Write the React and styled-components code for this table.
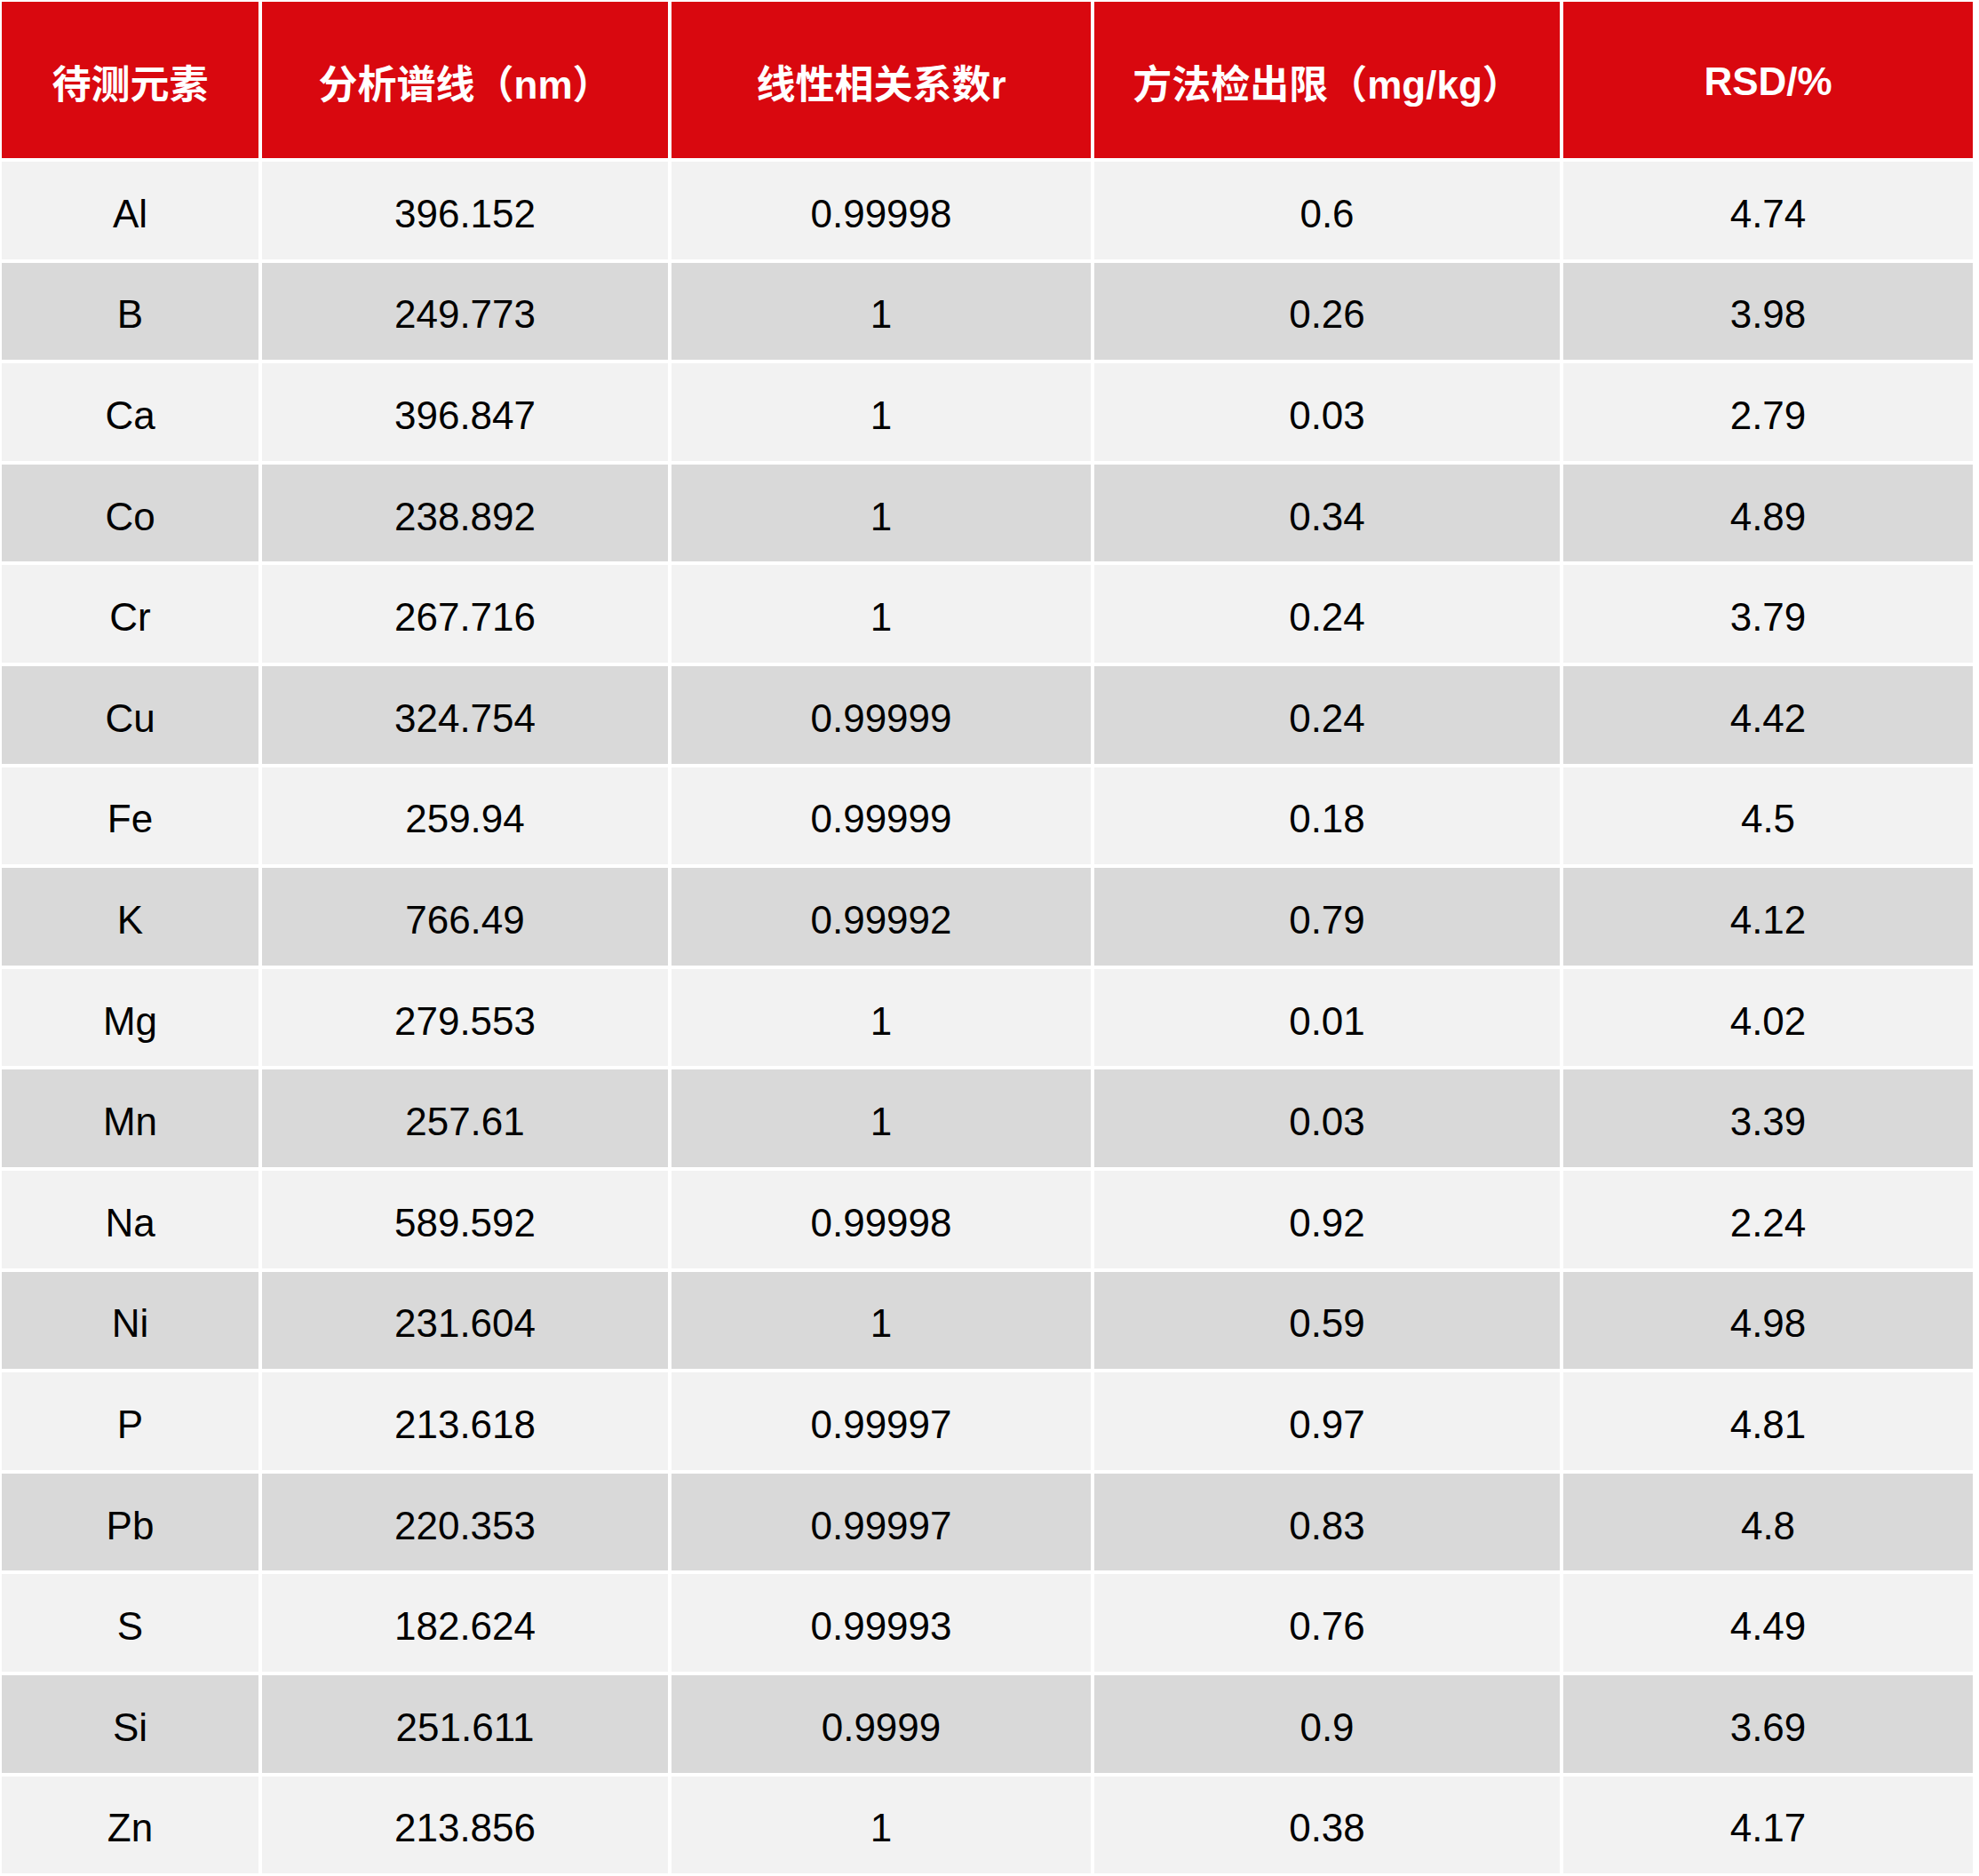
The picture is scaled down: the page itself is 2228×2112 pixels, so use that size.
import styled, { createGlobalStyle } from "styled-components";

const rows = [
  ["Al", "396.152", "0.99998", "0.6", "4.74"],
  ["B", "249.773", "1", "0.26", "3.98"],
  ["Ca", "396.847", "1", "0.03", "2.79"],
  ["Co", "238.892", "1", "0.34", "4.89"],
  ["Cr", "267.716", "1", "0.24", "3.79"],
  ["Cu", "324.754", "0.99999", "0.24", "4.42"],
  ["Fe", "259.94", "0.99999", "0.18", "4.5"],
  ["K", "766.49", "0.99992", "0.79", "4.12"],
  ["Mg", "279.553", "1", "0.01", "4.02"],
  ["Mn", "257.61", "1", "0.03", "3.39"],
  ["Na", "589.592", "0.99998", "0.92", "2.24"],
  ["Ni", "231.604", "1", "0.59", "4.98"],
  ["P", "213.618", "0.99997", "0.97", "4.81"],
  ["Pb", "220.353", "0.99997", "0.83", "4.8"],
  ["S", "182.624", "0.99993", "0.76", "4.49"],
  ["Si", "251.611", "0.9999", "0.9", "3.69"],
  ["Zn", "213.856", "1", "0.38", "4.17"],
];

const headers = [
  "待测元素",
  "分析谱线（nm）",
  "线性相关系数r",
  "方法检出限（mg/kg）",
  "RSD/%",
];

export default function App() {
  return (
    <>
      <GlobalStyle />
      <Table>
        {headers.map((h) => (
          <HeadCell key={h}>{h}</HeadCell>
        ))}
        {rows.map((row, i) =>
          row.map((value, j) => (
            <Cell key={`${i}-${j}`} $shade={i % 2 === 1}>
              {value}
            </Cell>
          ))
        )}
      </Table>
    </>
  );
}

const GlobalStyle = createGlobalStyle`
  html, body {
    margin: 0;
    padding: 0;
    background: #ffffff;
  }
`;

const Table = styled.div`
  display: grid;
  grid-template-columns: 289px 457px 472px 524px 461px;
  grid-template-rows: 176px;
  grid-auto-rows: 109.6px;
  gap: 4px;
  padding: 2px;
  width: max-content;
  background: #ffffff;
`;

const HeadCell = styled.div`
  display: flex;
  align-items: center;
  justify-content: center;
  padding-top: 4px;
  box-sizing: border-box;
  background: #d9080f;
  color: #ffffff;
  font-family: "Liberation Sans", "Noto Sans CJK SC", sans-serif;
  font-weight: 700;
  font-size: 44px;
  white-space: nowrap;
`;

const Cell = styled.div`
  display: flex;
  align-items: center;
  justify-content: center;
  padding-top: 8px;
  box-sizing: border-box;
  background: ${({ $shade }) => ($shade ? "#d9d9d9" : "#f2f2f2")};
  color: #000000;
  font-family: "Liberation Sans", Arial, sans-serif;
  font-size: 44px;
`;
